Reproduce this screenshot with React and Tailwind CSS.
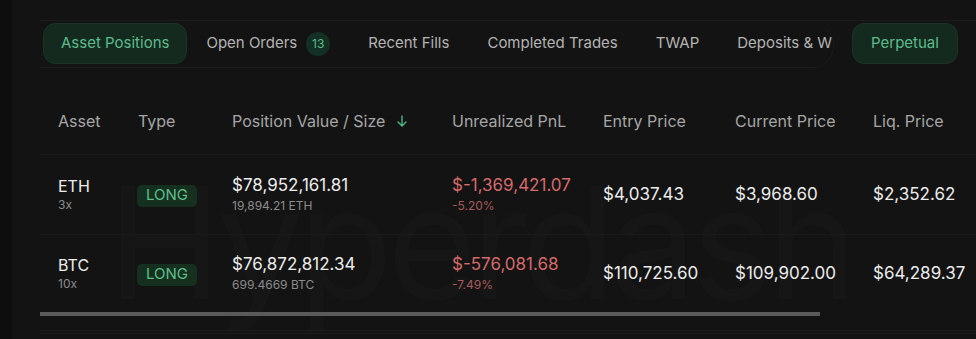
import React from "react";

const font = { fontFamily: "Inter, 'Noto Sans', 'Liberation Sans', sans-serif" };

function Tab({ children, active, badge }) {
  if (active) {
    return (
      <div className="flex h-[41px] items-center rounded-[12px] border border-[#1a3326] bg-[#142a1f] px-[17px] text-[15px] text-[#5dbb8b] shrink-0">
        {children}
      </div>
    );
  }
  return (
    <div className="flex h-[41px] items-center gap-[9px] px-[19px] text-[15px] text-[#b4b4b4] shrink-0 whitespace-nowrap">
      {children}
      {badge && (
        <span className="flex h-[24px] w-[24px] items-center justify-center rounded-full bg-[#143024] text-[12px] text-[#5dbb8b]">
          {badge}
        </span>
      )}
    </div>
  );
}

const rows = [
  {
    asset: "ETH",
    lev: "3x",
    value: "$78,952,161.81",
    size: "19,894.21 ETH",
    pnl: "$-1,369,421.07",
    pct: "-5.20%",
    entry: "$4,037.43",
    current: "$3,968.60",
    liq: "$2,352.62",
  },
  {
    asset: "BTC",
    lev: "10x",
    value: "$76,872,812.34",
    size: "699.4669 BTC",
    pnl: "$-576,081.68",
    pct: "-7.49%",
    entry: "$110,725.60",
    current: "$109,902.00",
    liq: "$64,289.37",
  },
];

const cols = "grid grid-cols-[80px_94px_220px_151px_132px_138px_140px]";

export default function App() {
  return (
    <div style={font} className="flex h-[339px] w-[976px] overflow-hidden bg-[#131313]">
      <div className="w-[12px] shrink-0 bg-[#0e0e0e]" />
      <div className="relative flex min-w-0 flex-1 flex-col pl-[28px] pt-[20px]">
        {/* watermark */}
        <div className="pointer-events-none absolute left-[95px] top-[165px] select-none text-[155px] leading-none tracking-[-6px] text-[#161616]">
          Hyperdash
        </div>

        {/* tab bar */}
        <div className="relative flex h-[47px] items-start border-t border-[#1c1c1c] pt-[2px]">
          <div className="flex h-[45px] w-[794px] shrink-0 items-center overflow-hidden rounded-r-[22px] border-r border-b border-[#1c1c1c] pb-[3px] pl-[3px]">
            <Tab active>Asset Positions</Tab>
            <Tab badge="13">Open Orders</Tab>
            <Tab>Recent Fills</Tab>
            <Tab>Completed Trades</Tab>
            <Tab>TWAP</Tab>
            <Tab>Deposits &amp; W</Tab>
          </div>
          <div className="ml-[18px] shrink-0">
            <div className="flex h-[41px] items-center rounded-[12px] border border-[#1a3326] bg-[#142a1f] px-[18px] text-[15px] text-[#5dbb8b]">
              Perpetual
            </div>
          </div>
        </div>

        {/* table */}
        <div className="relative mt-[21px] flex flex-col">
          <div className={`${cols} h-[67px] items-center border-b border-[#1a1a1a] text-[16px] text-[#a6a6a6]`}>
            <div className="pl-[18px]">Asset</div>
            <div className="pl-[18px]">Type</div>
            <div className="flex items-center gap-[10px] pl-[18px]">
              Position Value / Size
              <svg width="14" height="14" viewBox="0 0 14 14" fill="none" stroke="#4fb582" strokeWidth="1.4" strokeLinecap="round" strokeLinejoin="round">
                <path d="M7 2v10M3 8l4 4 4-4" />
              </svg>
            </div>
            <div className="pl-[18px] whitespace-nowrap">Unrealized PnL</div>
            <div className="pl-[18px] whitespace-nowrap">Entry Price</div>
            <div className="pl-[18px] whitespace-nowrap">Current Price</div>
            <div className="pl-[18px] whitespace-nowrap">Liq. Price</div>
          </div>
          {rows.map((r, i) => (
            <div
              key={r.asset}
              className={`${cols} items-center ${i === 0 ? "h-[80px] border-b border-[#1a1a1a]" : "h-[77px]"}`}
            >
              <div className="flex flex-col pl-[18px]">
                <span className="text-[16px] leading-[20px] text-[#ececec]">{r.asset}</span>
                <span className="text-[12px] leading-[18px] text-[#8c8c8c]">{r.lev}</span>
              </div>
              <div className="pl-[17px]">
                <span className="inline-flex h-[22px] items-center rounded-[5px] bg-[#15301f] px-[9px] text-[15px] text-[#5dbf8c]">
                  LONG
                </span>
              </div>
              <div className="flex flex-col pl-[18px]">
                <span className="text-[17px] leading-[22px] text-[#ececec]">{r.value}</span>
                <span className="text-[12px] leading-[20px] text-[#8c8c8c]">{r.size}</span>
              </div>
              <div className="flex flex-col pl-[18px]">
                <span className="text-[17px] leading-[22px] text-[#d46a6a]">{r.pnl}</span>
                <span className="text-[12px] leading-[20px] text-[#a85a5a]">{r.pct}</span>
              </div>
              <div className="pl-[18px] text-[17px] text-[#ececec] whitespace-nowrap">{r.entry}</div>
              <div className="pl-[18px] text-[17px] text-[#ececec] whitespace-nowrap">{r.current}</div>
              <div className="pl-[18px] text-[17px] text-[#ececec] whitespace-nowrap">{r.liq}</div>
            </div>
          ))}
          <div className="h-[4px] w-[780px] bg-[#5a5a5a]" />
          <div className="mt-[14px] h-[4px] border-t border-b border-[#1e1e1e]" />
        </div>
      </div>
    </div>
  );
}
